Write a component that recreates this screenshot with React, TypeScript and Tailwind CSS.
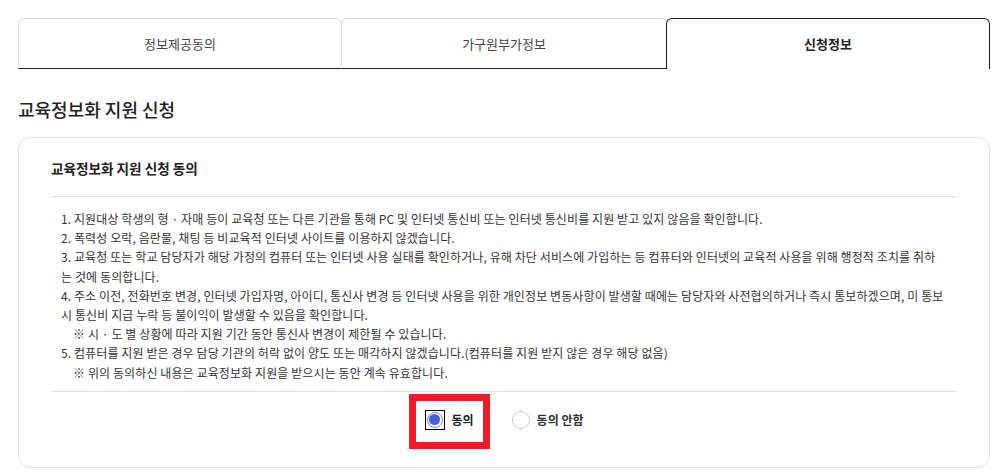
const lines: { text: string; indent?: boolean }[] = [
  { text: "1. 지원대상 학생의 형 · 자매 등이 교육청 또는 다른 기관을 통해 PC 및 인터넷 통신비 또는 인터넷 통신비를 지원 받고 있지 않음을 확인합니다." },
  { text: "2. 폭력성 오락, 음란물, 채팅 등 비교육적 인터넷 사이트를 이용하지 않겠습니다." },
  { text: "3. 교육청 또는 학교 담당자가 해당 가정의 컴퓨터 또는 인터넷 사용 실태를 확인하거나, 유해 차단 서비스에 가입하는 등 컴퓨터와 인터넷의 교육적 사용을 위해 행정적 조치를 취하" },
  { text: "는 것에 동의합니다." },
  { text: "4. 주소 이전, 전화번호 변경, 인터넷 가입자명, 아이디, 통신사 변경 등 인터넷 사용을 위한 개인정보 변동사항이 발생할 때에는 담당자와 사전협의하거나 즉시 통보하겠으며, 미 통보" },
  { text: "시 통신비 지급 누락 등 불이익이 발생할 수 있음을 확인합니다." },
  { text: "※ 시 · 도 별 상황에 따라 지원 기간 동안 통신사 변경이 제한될 수 있습니다.", indent: true },
  { text: "5. 컴퓨터를 지원 받은 경우 담당 기관의 허락 없이 양도 또는 매각하지 않겠습니다.(컴퓨터를 지원 받지 않은 경우 해당 없음)" },
  { text: "※ 위의 동의하신 내용은 교육정보화 지원을 받으시는 동안 계속 유효합니다.", indent: true },
];

export default function App() {
  return (
    <div className="w-[1006px] h-[474px] bg-white font-['Noto_Sans_CJK_KR',sans-serif] text-[#333] overflow-hidden">
      <div className="pt-[18px] px-[18px] w-[1008px]">
        {/* Tabs */}
        <div className="flex h-[51px]">
          <div className="w-[324px] flex items-center justify-center border border-[#ddd] border-b-[#222] rounded-t-[6px] text-[13px] text-[#444]">
            정보제공동의
          </div>
          <div className="w-[326px] -ml-px flex items-center justify-center border border-[#ddd] border-b-[#222] rounded-t-[6px] text-[13px] text-[#444]">
            가구원부가정보
          </div>
          <div className="w-[324px] -ml-px flex items-center justify-center border border-[#222] border-b-0 rounded-t-[6px] text-[13px] font-bold text-[#222]">
            신청정보
          </div>
        </div>

        <h2 className="mt-[27px] text-[18px] font-medium text-[#222] leading-[26px]">교육정보화 지원 신청</h2>

        {/* Card */}
        <div className="mt-[15px] w-[972px] h-[331px] border border-[#e2e2e2] rounded-[12px] px-[32px]">
          <div className="h-[58px] flex items-center text-[13.6px] font-bold text-[#222] pt-[2px]">
            교육정보화 지원 신청 동의
          </div>
          <div className="border-t border-[#e0e0e0]" />
          <div className="pt-[12px] pb-[9px] pl-[10px] text-[12px] leading-[19.2px] tracking-[0.1px] text-[#333]">
            {lines.map((l, i) => (
              <div key={i} className={`whitespace-nowrap ${l.indent ? "pl-[12px]" : ""}`}>
                {l.text}
              </div>
            ))}
          </div>
          <div className="border-t border-[#e0e0e0]" />
          <div className="flex justify-center items-center h-[56px] gap-[24px]">
            <div className="relative flex items-center gap-[7px] h-full">
              <div className="absolute left-[-16px] top-[2px] w-[81px] h-[55px] border-[7px] border-[#ee1c25]" />
              <div className="w-[20px] h-[20px] border border-black flex items-center justify-center">
                <div className="w-[16px] h-[16px] rounded-full border border-[#6f86e8] flex items-center justify-center">
                  <div className="w-[11px] h-[11px] rounded-full bg-[#4360d8]" />
                </div>
              </div>
              <span className="text-[12px] font-bold text-[#222]">동의</span>
            </div>
            <div className="flex items-center gap-[7px] ml-[14px]">
              <div className="w-[18px] h-[18px] rounded-full border border-[#ccc]" />
              <span className="text-[12px] font-bold text-[#333]">동의 안함</span>
            </div>
          </div>
        </div>
      </div>
    </div>
  );
}
